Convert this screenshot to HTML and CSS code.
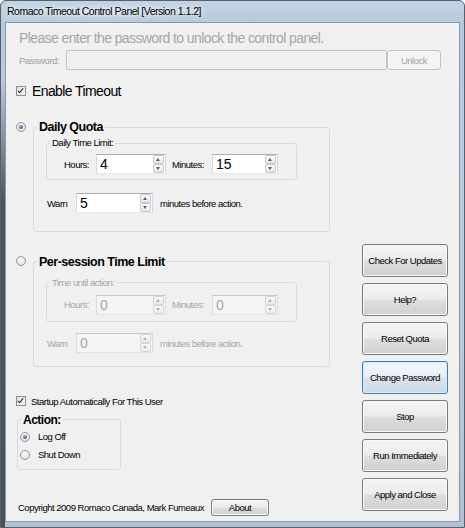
FILE: index.html
```html
<!DOCTYPE html>
<html lang="en">
<head>
  <meta charset="UTF-8">
  <meta name="viewport" content="width=device-width, initial-scale=1.0">
  <title>Romaco Timeout Control Panel</title>
  <link rel="stylesheet" href="styles.css">
</head>
<body>

<div class="window">
  <div class="titlebar"><span class="title">Romaco Timeout Control Panel [Version 1.1.2]</span></div>

  <div class="client">
    <div class="prompt">Please enter the password to unlock the control panel.</div>

    <div class="pass-row">
      <label class="pass-label" for="password">Password:</label>
      <input class="textbox" type="password" id="password" disabled>
      <button class="btn unlock" disabled>Unlock</button>
    </div>

    <div class="check-row enable">
      <span class="check on"></span>
      <span class="check-text">Enable Timeout</span>
    </div>

    <div class="main">
      <div class="left">

        <div class="mode daily">
          <span class="radio on"></span>
          <fieldset class="group outer">
            <legend>Daily Quota</legend>
            <fieldset class="group inner">
              <legend>Daily Time Limit:</legend>
              <div class="spin-row">
                <span class="lbl hours">Hours:</span>
                <div class="spin hours-box"><span class="val">4</span><span class="arrows"><i class="up"></i><i class="down"></i></span></div>
                <span class="lbl minutes">Minutes:</span>
                <div class="spin minutes-box"><span class="val">15</span><span class="arrows"><i class="up"></i><i class="down"></i></span></div>
              </div>
            </fieldset>
            <div class="warn-row">
              <span class="lbl warn">Warn</span>
              <div class="spin warn-box"><span class="val">5</span><span class="arrows"><i class="up"></i><i class="down"></i></span></div>
              <span class="lbl after">minutes before action.</span>
            </div>
          </fieldset>
        </div>

        <div class="mode session">
          <span class="radio"></span>
          <fieldset class="group outer">
            <legend>Per-session Time Limit</legend>
            <fieldset class="group inner off">
              <legend>Time until action:</legend>
              <div class="spin-row">
                <span class="lbl hours">Hours:</span>
                <div class="spin hours-box off"><span class="val">0</span><span class="arrows"><i class="up"></i><i class="down"></i></span></div>
                <span class="lbl minutes">Minutes:</span>
                <div class="spin minutes-box off"><span class="val">0</span><span class="arrows"><i class="up"></i><i class="down"></i></span></div>
              </div>
            </fieldset>
            <div class="warn-row off">
              <span class="lbl warn">Warn</span>
              <div class="spin warn-box off"><span class="val">0</span><span class="arrows"><i class="up"></i><i class="down"></i></span></div>
              <span class="lbl after">minutes before action.</span>
            </div>
          </fieldset>
        </div>

        <div class="check-row startup">
          <span class="check on"></span>
          <span class="check-text">Startup Automatically For This User</span>
        </div>

        <fieldset class="group action">
          <legend>Action:</legend>
          <div class="radio-row first">
            <span class="radio on"></span>
            <span>Log Off</span>
          </div>
          <div class="radio-row">
            <span class="radio"></span>
            <span>Shut Down</span>
          </div>
        </fieldset>

        <div class="footer">
          <span class="copyright">Copyright 2009 Romaco Canada, Mark Fumeaux</span>
          <button class="btn about">About</button>
        </div>
      </div>

      <div class="right">
        <button class="btn side">Check For Updates</button>
        <button class="btn side">Help?</button>
        <button class="btn side">Reset Quota</button>
        <button class="btn side focus">Change Password</button>
        <button class="btn side">Stop</button>
        <button class="btn side">Run Immediately</button>
        <button class="btn side">Apply and Close</button>
      </div>
    </div>
  </div>
</div>

</body>
</html>
```

FILE: styles.css
```css
html, body {
  margin: 0;
  padding: 0;
  background: #ffffff;
}
body {
  font-family: "Liberation Sans", Arial, sans-serif;
  font-size: 9.5px;
  letter-spacing: -0.5px;
  color: #000;
}
.window {
  width: 465px;
  height: 528px;
  box-sizing: border-box;
  border: 1px solid #56606c;
  border-radius: 6px 6px 0 0;
  background:
    linear-gradient(to bottom, rgba(40, 44, 50, 0) 80px, rgba(40, 44, 50, 0.75) 200px) left top / 4px 100% no-repeat,
    linear-gradient(to bottom, #c3d3e4 0, #b8c9dc 22px, #bccbdb 60%, #b2c2d3 100%);
  display: flex;
  flex-direction: column;
}
.titlebar {
  height: 21px;
  line-height: 21px;
  padding-left: 5px;
}
.title {
  font-size: 10.5px;
  padding: 0 8px 0 1px;
  text-shadow: 0 0 6px #fff, 0 0 10px rgba(255, 255, 255, 0.8);
  background: radial-gradient(ellipse at center, rgba(255, 255, 255, 0.45), rgba(255, 255, 255, 0) 72%);
}
.client {
  margin: 0 4px;
  width: 453px;
  height: 498px;
  border: 1px solid #8a9aab;
  background: #f0f0f0;
}

/* password strip */
.prompt {
  margin: 6px 0 0 13px;
  font-size: 14px;
  letter-spacing: -0.6px;
  line-height: 18px;
  color: #a6a6a6;
}
.pass-row {
  display: flex;
  align-items: center;
  margin-top: 3px;
  height: 20px;
}
.pass-label {
  margin-left: 13px;
  width: 47px;
  color: #a0a0a0;
}
.textbox {
  width: 321px;
  height: 20px;
  box-sizing: border-box;
  margin: 0;
  border: 1px solid #c3c3c3;
  border-radius: 2px;
  background: #f0f0f0;
}
.unlock {
  margin-left: 6px;
  width: 54px;
  height: 20px;
}

/* check boxes and radios */
.check-row {
  display: flex;
  align-items: center;
}
.check {
  width: 10px;
  height: 10px;
  box-sizing: border-box;
  border: 1px solid #8e8f8f;
  background: linear-gradient(135deg, #dcdfe3, #fbfbfb);
  position: relative;
}
.check.on::after {
  content: "";
  position: absolute;
  left: 2px;
  top: 0px;
  width: 2px;
  height: 5px;
  border: solid #1e2a3a;
  border-width: 0 1.5px 1.5px 0;
  transform: rotate(40deg);
}
.enable {
  margin-top: 13px;
  height: 16px;
}
.enable .check {
  margin-left: 10px;
}
.enable .check-text {
  margin-left: 6px;
  font-size: 14px;
  letter-spacing: -0.6px;
}
.radio {
  width: 10px;
  height: 10px;
  box-sizing: border-box;
  border-radius: 50%;
  border: 1px solid #989898;
  background: radial-gradient(circle at 50% 40%, #ffffff, #d4d4d4);
  position: relative;
  flex: none;
}
.radio.on::after {
  content: "";
  position: absolute;
  left: 2px;
  top: 2px;
  width: 4px;
  height: 4px;
  border-radius: 50%;
  background: radial-gradient(circle at 40% 35%, #8fb0d6, #1f3d64);
}

/* main area */
.main {
  display: flex;
}
.left {
  width: 356px;
}
.right {
  width: 86px;
  padding-top: 145px;
  display: flex;
  flex-direction: column;
  gap: 6px;
}

.mode {
  display: flex;
  align-items: flex-start;
}
.mode .radio {
  margin: 2.5px 0 0 10px;
}
.daily {
  margin-top: 20px;
}
.session {
  margin-top: 21.5px;
}

.group {
  margin: 0;
  padding: 0;
  border: 1px solid #d5dbe0;
  border-radius: 3px;
  box-sizing: border-box;
  min-width: 0;
}
.group legend {
  margin-left: 3px;
  padding: 0 2px;
}
.outer {
  margin-left: 7px;
  width: 297px;
}
.outer > legend {
  font-weight: bold;
  font-size: 12.5px;
  line-height: 16px;
}
.daily .outer {
  padding-bottom: 18px;
}
.session .outer {
  padding-bottom: 13px;
}
.inner {
  margin-left: 12px;
  width: 251px;
}
.inner > legend {
  line-height: 12px;
}
.daily .inner {
  margin-top: 2px;
  padding-bottom: 5px;
}
.session .inner {
  margin-top: 7px;
  padding-bottom: 6px;
}

.spin-row, .warn-row {
  display: flex;
  align-items: center;
  height: 20px;
}
.daily .spin-row {
  margin-top: 5px;
}
.session .spin-row {
  margin-top: 6px;
}
.daily .warn-row {
  margin-top: 13px;
}
.session .warn-row {
  margin-top: 11.5px;
}
.lbl.hours {
  margin-left: 17px;
  width: 32px;
}
.lbl.minutes {
  margin-left: 6px;
  width: 40px;
}
.lbl.warn {
  margin-left: 13px;
  width: 29px;
}
.lbl.after {
  margin-left: 7px;
}

.spin {
  display: flex;
  height: 20px;
  box-sizing: border-box;
  border: 1px solid;
  border-color: #abadb3 #d5d9e0 #e3e9ef #d5d9e0;
  background: #fff;
}
.hours-box { width: 70px; }
.minutes-box { width: 66px; }
.warn-box { width: 77px; }
.val {
  flex: 1;
  padding-left: 3px;
  font-size: 14px;
  letter-spacing: 0;
  line-height: 18px;
}
.arrows {
  width: 11px;
  display: flex;
  flex-direction: column;
  padding: 0 1px 0 0;
}
.arrows i {
  flex: 1;
  position: relative;
  border: 1px solid #c4c9cf;
  border-radius: 2px;
  background: linear-gradient(to bottom, #fdfdfd, #e4e6e8);
}
.arrows i::after {
  content: "";
  position: absolute;
  left: 2px;
  top: 2px;
  border-left: 2.5px solid transparent;
  border-right: 2.5px solid transparent;
}
.arrows .up::after {
  border-bottom: 3px solid #55606c;
}
.arrows .down::after {
  border-top: 3px solid #55606c;
}

/* disabled parts of the per-session box */
.off, .off legend {
  color: #a6a6a6;
}
.spin.off {
  background: #f4f4f4;
  border-color: #c9c9c9 #dadada #e2e2e2 #dadada;
}
.spin.off .val {
  color: #a6a6a6;
}
.spin.off .arrows i {
  border-color: #d4d4d4;
  background: linear-gradient(to bottom, #f8f8f8, #ececec);
}
.spin.off .arrows .up::after {
  border-bottom-color: #b0b0b0;
}
.spin.off .arrows .down::after {
  border-top-color: #b0b0b0;
}

/* startup, action, footer */
.startup {
  margin-top: 27px;
  height: 14px;
}
.startup .check {
  margin-left: 10px;
}
.startup .check-text {
  margin-left: 5px;
}
.action {
  margin: 3.5px 0 0 11px;
  width: 104px;
  padding: 0 0 7px 0;
}
.action > legend {
  font-weight: bold;
  font-size: 12px;
  line-height: 16px;
}
.radio-row {
  display: flex;
  align-items: center;
  height: 14px;
  margin-top: 4px;
}
.radio-row.first {
  margin-top: 2px;
}
.radio-row .radio {
  margin-left: 2px;
}
.radio-row span + span {
  margin-left: 8px;
}
.footer {
  display: flex;
  align-items: center;
  margin-top: 29px;
  height: 17px;
}
.copyright {
  margin-left: 12px;
  width: 193px;
  white-space: nowrap;
}

/* buttons */
.btn {
  font-family: inherit;
  font-size: 9.5px;
  letter-spacing: -0.5px;
  color: #000;
  padding: 0;
  margin: 0;
  box-sizing: border-box;
  border: 1px solid #7a7a7a;
  border-radius: 3px;
  background: linear-gradient(to bottom, #f4f4f4 0, #ececec 48%, #dedede 52%, #d0d0d0 100%);
  box-shadow: inset 0 0 0 1px #fbfbfb;
}
.btn:disabled {
  color: #a3a3a3;
  border-color: #c2c4c6;
  background: #f4f4f4;
  box-shadow: none;
}
.about {
  width: 58px;
  height: 17px;
}
.side {
  width: 86px;
  height: 33px;
}
.side.focus {
  border-color: #3c7fb1;
  background: linear-gradient(to bottom, #f2f6fa 0, #e9eff5 48%, #dbe4ec 52%, #cfd9e3 100%);
  box-shadow: inset 0 0 0 1px #d8ecfa;
}
```
